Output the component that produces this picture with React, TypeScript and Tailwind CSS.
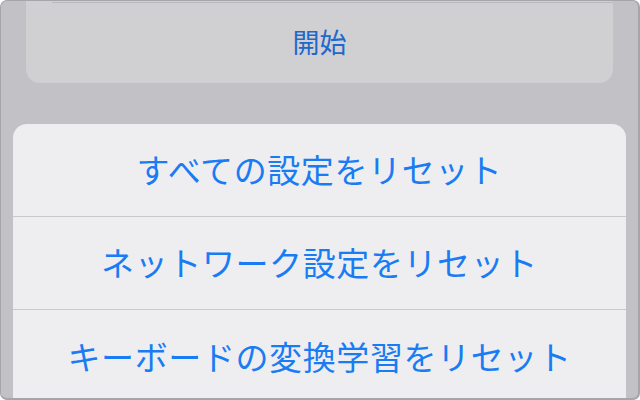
import * as React from 'react'

const rows = ['すべての設定をリセット', 'ネットワーク設定をリセット', 'キーボードの変換学習をリセット']

export default function App() {
  return (
    <div
      className="w-[640px] h-[400px] bg-white"
      style={{ fontFamily: '"Noto Sans CJK JP", "Noto Sans", sans-serif' }}
    >
      <div className="w-full h-full rounded-[7px] border-l border-t border-r-2 border-b-2 border-[#a6a6aa] bg-[#c2c2c6] overflow-hidden flex flex-col">
        <div className="shrink-0 mx-[25px] mt-[-20px] h-[102px] rounded-[14px] bg-[#d0d0d2] flex flex-col">
          <div className="h-[22px] ml-[26px] border-b border-[#b9b9bc]" />
          <div className="flex-1 flex items-center justify-center text-[27px] text-[#2068cc] pb-[2px]">
            開始
          </div>
        </div>
        <div className="shrink-0 mt-[41px] mx-[12px] h-[300px] rounded-t-[14px] bg-[#eeeef0] flex flex-col">
          {rows.map((label, i) => (
            <div
              key={label}
              className={
                i < rows.length - 1
                  ? 'h-[93px] shrink-0 flex items-center justify-center border-b border-[#c9c9cc] text-[33px] text-[#1a7cf4] tracking-[0.6px]'
                  : 'h-[93px] shrink-0 flex items-center justify-center text-[33px] text-[#1a7cf4] tracking-[0.6px]'
              }
            >
              {label}
            </div>
          ))}
        </div>
      </div>
    </div>
  )
}
